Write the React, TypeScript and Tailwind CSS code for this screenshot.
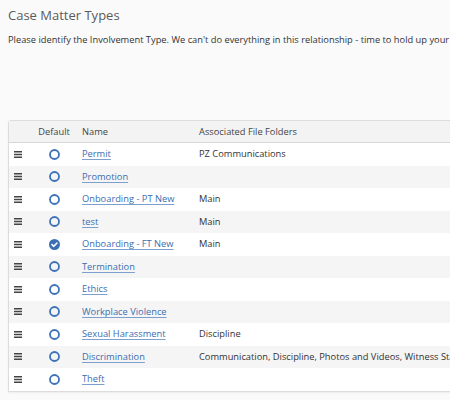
import React from 'react';

interface MatterType {
  name: string;
  folders: string;
  isDefault?: boolean;
}

const rows: MatterType[] = [
  { name: 'Permit', folders: 'PZ Communications' },
  { name: 'Promotion', folders: '' },
  { name: 'Onboarding - PT New', folders: 'Main' },
  { name: 'test', folders: 'Main' },
  { name: 'Onboarding - FT New', folders: 'Main', isDefault: true },
  { name: 'Termination', folders: '' },
  { name: 'Ethics', folders: '' },
  { name: 'Workplace Violence', folders: '' },
  { name: 'Sexual Harassment', folders: 'Discipline' },
  { name: 'Discrimination', folders: 'Communication, Discipline, Photos and Videos, Witness Statements' },
  { name: 'Theft', folders: '' },
];

const DragHandle = () => (
  <svg width="8" height="7" viewBox="0 0 8 7" className="block">
    <rect x="0" y="0" width="8" height="1.5" fill="#444" />
    <rect x="0" y="2.75" width="8" height="1.5" fill="#444" />
    <rect x="0" y="5.5" width="8" height="1.5" fill="#444" />
  </svg>
);

const Radio: React.FC<{ checked?: boolean }> = ({ checked }) =>
  checked ? (
    <svg width="11" height="11" viewBox="0 0 11 11" className="block">
      <circle cx="5.5" cy="5.5" r="5.5" fill="#3b6fb3" />
      <path d="M3 5.6 L4.8 7.3 L8 4" stroke="#fff" strokeWidth="1.6" fill="none" strokeLinecap="round" strokeLinejoin="round" />
    </svg>
  ) : (
    <svg width="11" height="11" viewBox="0 0 11 11" className="block">
      <circle cx="5.5" cy="5.5" r="4.5" fill="none" stroke="#3b72b9" strokeWidth="1.8" />
    </svg>
  );

export default function App() {
  return (
    <div className="w-[450px] h-[400px] overflow-hidden bg-[#fafafa] font-['Open_Sans',sans-serif]">
      <div className="pl-2 pt-[3px]">
        <h1 className="text-[13px] leading-[24px] text-[#5a5a5a] whitespace-nowrap">Case Matter Types</h1>
        <p className="mt-[6px] text-[9.3px] leading-[14px] text-[#333] whitespace-nowrap">
          Please identify the Involvement Type. We can't do everything in this relationship - time to hold up your
        </p>
      </div>

      <div className="ml-2 mt-[73px] w-[600px] bg-white border border-[#dcdcdc] rounded-tl-[3px] shadow-[0_1px_2px_rgba(0,0,0,0.06)]">
        <div className="flex items-center h-[22px] bg-[#f3f3f3] border-b border-[#d8d8d8] text-[9.3px] text-[#444]">
          <div className="w-[17px]" />
          <div className="w-[56px] text-center">Default</div>
          <div className="w-[117px]">Name</div>
          <div className="flex-1">Associated File Folders</div>
        </div>
        {rows.map((r, i) => (
          <div
            key={r.name}
            className={`flex items-center h-[22.5px] text-[9.3px] ${i % 2 === 1 ? 'bg-[#f5f5f5]' : 'bg-white'}`}
          >
            <div className="w-[17px] flex justify-center">
              <DragHandle />
            </div>
            <div className="w-[56px] flex justify-center">
              <Radio checked={r.isDefault} />
            </div>
            <div className="w-[117px]">
              <a className="text-[#3a6db0] underline underline-offset-2 decoration-[#7d9fcc] whitespace-nowrap cursor-pointer">
                {r.name}
              </a>
            </div>
            <div className="flex-1 text-[#333] whitespace-nowrap">{r.folders}</div>
          </div>
        ))}
      </div>
    </div>
  );
}
